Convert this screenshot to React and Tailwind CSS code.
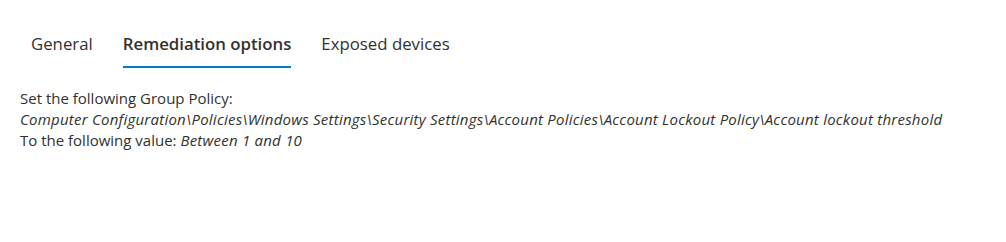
function Tab({ label, active }) {
  return (
    <div className="px-[15px] flex flex-col">
      <div className={active ? "text-[16.8px] leading-[36px] font-semibold text-[#323130]" : "text-[16.8px] leading-[36px] text-[#323130]"}>
        {label}
      </div>
      <div className={active ? "mt-[4px] h-[2px] bg-[#0078d4]" : "mt-[4px] h-[2px] bg-transparent"}></div>
    </div>
  );
}

export default function App() {
  return (
    <div className="w-[1006px] h-[242px] bg-white text-[#323130] font-['Open_Sans','Noto_Sans',sans-serif]">
      <div className="flex pl-[16px] pt-[26px]">
        <Tab label="General" />
        <Tab label="Remediation options" active />
        <Tab label="Exposed devices" />
      </div>
      <div className="pl-[20px] pt-[20px] text-[15px] leading-[21px]">
        <div>Set the following Group Policy:</div>
        <div className="italic tracking-[0.23px]">Computer Configuration\Policies\Windows Settings\Security Settings\Account Policies\Account Lockout Policy\Account lockout threshold</div>
        <div>To the following value: <span className="italic tracking-[0.23px]">Between 1 and 10</span></div>
      </div>
    </div>
  );
}
